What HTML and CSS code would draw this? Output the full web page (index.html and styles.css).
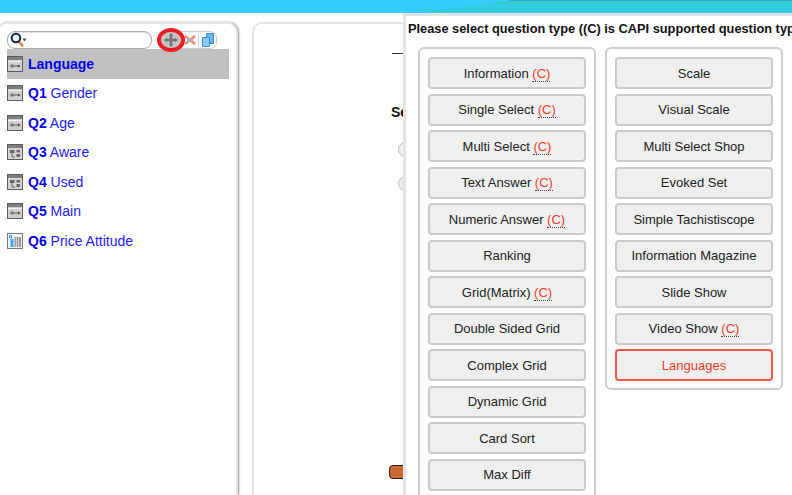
FILE: index.html
```html
<!DOCTYPE html>
<html>
  <head>
    <title>Questionnaire</title>
    <link rel="stylesheet" href="styles.css">
    <meta charset="utf-8">
  </head>
  <body>
    <svg class="icon-defs" width="0" height="0">
      <symbol id="ico-single" viewBox="0 0 16 16">
        <rect x="0.500" y="0.500" width="15" height="15" fill="#cfcfcf" stroke="#5c5c5c"/>
        <rect x="1" y="1" width="14" height="3" fill="#7e7e7e"/>
        <rect x="1" y="5" width="14" height="1" fill="#f2f2f2"/>
        <path d="M3 10h9" stroke="#6a6a6a" stroke-width="1.200"/>
        <rect x="4" y="8.500" width="2.500" height="3" fill="#777"/>
        <path d="M11 8.500l2.500 1.500-2.500 1.500z" fill="#444"/>
      </symbol>
      <symbol id="ico-multi" viewBox="0 0 16 16">
        <rect x="0.500" y="0.500" width="15" height="15" fill="#d4d4d4" stroke="#5c5c5c"/>
        <rect x="1" y="1" width="14" height="3" fill="#7e7e7e"/>
        <path d="M3 6h4.500v3H3zM9.500 6H13v2.500H9.500zM9.500 10H13v3H9.500z" fill="#666"/>
        <path d="M5 9v4h3" stroke="#666" fill="none"/>
      </symbol>
      <symbol id="ico-price" viewBox="0 0 16 16">
        <rect x="0.500" y="0.500" width="15" height="15" fill="#f4f4f4" stroke="#777"/>
        <path d="M2.500 2.500h2v2.500h-2z" fill="none" stroke="#39f"/>
        <rect x="3.500" y="6" width="3" height="8" fill="#3af"/>
        <rect x="7.500" y="4" width="6.500" height="10" fill="#999"/>
        <path d="M9.500 4v10M11.500 4v10" stroke="#e8e8e8" stroke-width="0.700"/>
      </symbol>
    </svg>

    <div class="top-bar"></div>

    <div class="main">
      <div class="panel side-panel">
        <div class="tool-row">
          <div class="search-box">
            <svg width="18" height="16" viewBox="0 0 18 16">
              <path d="M9 9.500l4 5" stroke="#d09040" stroke-width="2.600"/>
              <circle cx="6" cy="6" r="4.300" fill="#dff1ff" stroke="#1a2230" stroke-width="2"/>
              <path d="M12.500 6.500h4l-2 3z" fill="#444"/>
            </svg>
          </div>
          <div class="tool-btns">
            <span class="tool-btn active">
              <svg width="14" height="14" viewBox="0 0 14 14">
                <path d="M7 0l2.500 3H8.300v2.700H11V4.500l3 2.500-3 2.500V8.300H8.300V11h1.200L7 14l-2.500-3h1.200V8.300H3v1.200L0 7l3-2.500v1.200h2.700V3H4.500z" fill="#777"/>
              </svg>
            </span>
            <span class="tool-btn">
              <svg width="14" height="16" viewBox="0 0 14 16">
                <path d="M2 4l10 8M12 4L2 12" stroke="#ec8a76" stroke-width="2.400"/>
                <circle cx="7" cy="8" r="2" fill="#b4b4bc"/>
              </svg>
            </span>
            <span class="tool-btn">
              <svg width="16" height="16" viewBox="0 0 16 16">
                <path d="M6.500 1.500h7v10h-7z" fill="#6cb4ee" stroke="#3a8cd8"/>
                <path d="M2.500 5.500h7v9h-7z" fill="#8cc8f4" stroke="#3a8cd8"/>
              </svg>
            </span>
            <span class="add-ring"></span>
          </div>
        </div>

        <ul class="question-list">
          <li class="question selected"><svg class="q-icon"><use href="#ico-single"/></svg><span><b>Language</b></span></li>
          <li class="question"><svg class="q-icon"><use href="#ico-single"/></svg><span><b>Q1</b> Gender</span></li>
          <li class="question"><svg class="q-icon"><use href="#ico-single"/></svg><span><b>Q2</b> Age</span></li>
          <li class="question"><svg class="q-icon"><use href="#ico-multi"/></svg><span><b>Q3</b> Aware</span></li>
          <li class="question"><svg class="q-icon"><use href="#ico-multi"/></svg><span><b>Q4</b> Used</span></li>
          <li class="question"><svg class="q-icon"><use href="#ico-single"/></svg><span><b>Q5</b> Main</span></li>
          <li class="question"><svg class="q-icon"><use href="#ico-price"/></svg><span><b>Q6</b> Price Attitude</span></li>
        </ul>
      </div>

      <div class="panel center-panel">
        <div class="center-rule"></div>
        <div class="center-label">Select</div>
        <div class="center-radio first"></div>
        <div class="center-radio"></div>
        <div class="center-save"></div>
      </div>

      <div class="type-popup">
        <div class="popup-title">Please select question type ((C) is CAPI supported question type)</div>
        <div class="type-columns">
          <div class="type-box">
            <button class="type-btn">Information <span class="capi">(C)</span></button>
            <button class="type-btn">Single Select <span class="capi">(C)</span></button>
            <button class="type-btn">Multi Select <span class="capi">(C)</span></button>
            <button class="type-btn">Text Answer <span class="capi">(C)</span></button>
            <button class="type-btn">Numeric Answer <span class="capi">(C)</span></button>
            <button class="type-btn">Ranking</button>
            <button class="type-btn">Grid(Matrix) <span class="capi">(C)</span></button>
            <button class="type-btn">Double Sided Grid</button>
            <button class="type-btn">Complex Grid</button>
            <button class="type-btn">Dynamic Grid</button>
            <button class="type-btn">Card Sort</button>
            <button class="type-btn">Max Diff</button>
          </div>
          <div class="type-box">
            <button class="type-btn">Scale</button>
            <button class="type-btn">Visual Scale</button>
            <button class="type-btn">Multi Select Shop</button>
            <button class="type-btn">Evoked Set</button>
            <button class="type-btn">Simple Tachistiscope</button>
            <button class="type-btn">Information Magazine</button>
            <button class="type-btn">Slide Show</button>
            <button class="type-btn">Video Show <span class="capi">(C)</span></button>
            <button class="type-btn lang-btn">Languages</button>
          </div>
        </div>
      </div>
    </div>
  </body>
</html>
```

FILE: styles.css
```css
html, body {
  margin: 0;
  height: 495px;
  overflow: hidden;
  background: #fff;
  font-family: "Liberation Sans", Arial, sans-serif;
}
.icon-defs {
  position: absolute;
}
.top-bar {
  height: 13px;
  background: #33ccff;
  position: relative;
}
.top-bar::after {
  content: "";
  position: absolute;
  top: 0;
  left: 410px;
  right: 0;
  bottom: 0;
  clip-path: polygon(0 100%, 105px 0, 100% 0, 100% 100%);
  background: linear-gradient(#3399cc 0 1px, #33cccc 1px 4px, #33ccee 4px 6px, #33cccc 6px 7px, #33ccee 7px 10px, #33cccc 10px 12px, #33ccff 12px);
}
.main {
  position: relative;
  display: flex;
  gap: 14px;
  height: 482px;
  padding-top: 9px;
  margin-left: -3px;
  box-sizing: border-box;
}
.panel {
  border: 2px solid #e4e4e4;
  border-bottom: 0;
  border-radius: 10px 10px 0 0;
  background: #fff;
  box-sizing: border-box;
}
.side-panel {
  flex: 0 0 241px;
  padding: 7px 0 0 8px;
  box-shadow: 1px 0 2px #999;
}
.center-panel {
  flex: 1;
  display: flex;
  flex-direction: column;
  padding-left: 138px;
  overflow: hidden;
}

/* search and add / delete / copy */
.tool-row {
  display: flex;
  align-items: center;
  height: 18px;
}
.search-box {
  width: 141px;
  height: 16px;
  border: 1px solid #aaa;
  border-radius: 8px;
  display: flex;
  align-items: center;
  padding-left: 2px;
  box-shadow: inset 0 1px 1px #ddd;
}
.search-box svg {
  display: block;
}
.tool-btns {
  position: relative;
  display: flex;
  align-items: center;
  height: 16px;
  margin-left: 9px;
  border: 1px solid #ccc;
  border-radius: 7px;
}
.tool-btn {
  display: flex;
  align-items: center;
  justify-content: center;
  width: 18px;
  height: 16px;
  border-left: 1px solid #ddd;
  box-sizing: border-box;
}
.tool-btn:first-child {
  border-left: 0;
}
.tool-btn.active {
  background: #c4c4c4;
  border-radius: 7px 0 0 7px;
}
.add-ring {
  position: absolute;
  left: -5px;
  top: -4px;
  width: 28px;
  height: 24px;
  box-sizing: border-box;
  border: 4px solid #ee1c25;
  border-radius: 50%;
}

/* question tree */
.question-list {
  list-style: none;
  margin: 0;
  padding: 0;
  width: 222px;
}
.question {
  display: flex;
  align-items: center;
  gap: 5px;
  height: 29.5px;
  font-size: 14px;
  color: #2222ee;
  white-space: pre;
}
.question b {
  color: #0000ee;
}
.question.selected {
  background: #c0c0c0;
}
.q-icon {
  width: 16px;
  height: 16px;
  flex: none;
}

/* centre panel, mostly hidden by the popup */
.center-rule {
  width: 40px;
  height: 1px;
  background: #333;
  margin-top: 29px;
  flex: none;
}
.center-label {
  margin: 50px 0 0 -1px;
  font-size: 14px;
  font-weight: bold;
  color: #111;
}
.center-radio {
  width: 13px;
  height: 13px;
  border: 1px solid #bbb;
  border-radius: 50%;
  background: #eee;
  margin: 19px 0 0 6px;
  flex: none;
}
.center-radio.first {
  margin-top: 22px;
}
.center-save {
  width: 60px;
  height: 12px;
  margin: 274px 0 0 -3px;
  background: #cc6633;
  border: 1px solid #222;
  border-radius: 4px;
  flex: none;
}

/* question type popup */
.type-popup {
  position: absolute;
  top: 0;
  left: 406px;
  width: 420px;
  height: 482px;
  box-sizing: border-box;
  background: #fff;
  border: 3px solid #e4e4e8;
  border-right: 0;
  border-bottom: 0;
  overflow: hidden;
}
.popup-title {
  font-size: 12.8px;
  font-weight: bold;
  color: #111;
  white-space: nowrap;
  padding: 5px 0 0 2px;
  height: 26px;
  box-sizing: border-box;
}
.type-columns {
  display: flex;
  align-items: flex-start;
  gap: 9px;
  margin: 5px 0 0 12px;
}
.type-box {
  display: flex;
  flex-direction: column;
  gap: 4.500px;
  width: 178px;
  box-sizing: border-box;
  padding: 8px 8px 7px;
  border: 2px solid #ccc;
  border-radius: 6px;
}
.type-box:first-child {
  padding-bottom: 30px;
}
.type-btn {
  height: 32px;
  flex: none;
  padding: 0;
  font: 13px "Liberation Sans", Arial, sans-serif;
  color: #222;
  background: #efefef;
  border: 2px solid #cacaca;
  border-radius: 4px;
}
.capi {
  color: #f03c28;
  border-bottom: 1px dotted #444;
}
.lang-btn {
  color: #f03c28;
  border: 2px solid #f4564a;
}
```
